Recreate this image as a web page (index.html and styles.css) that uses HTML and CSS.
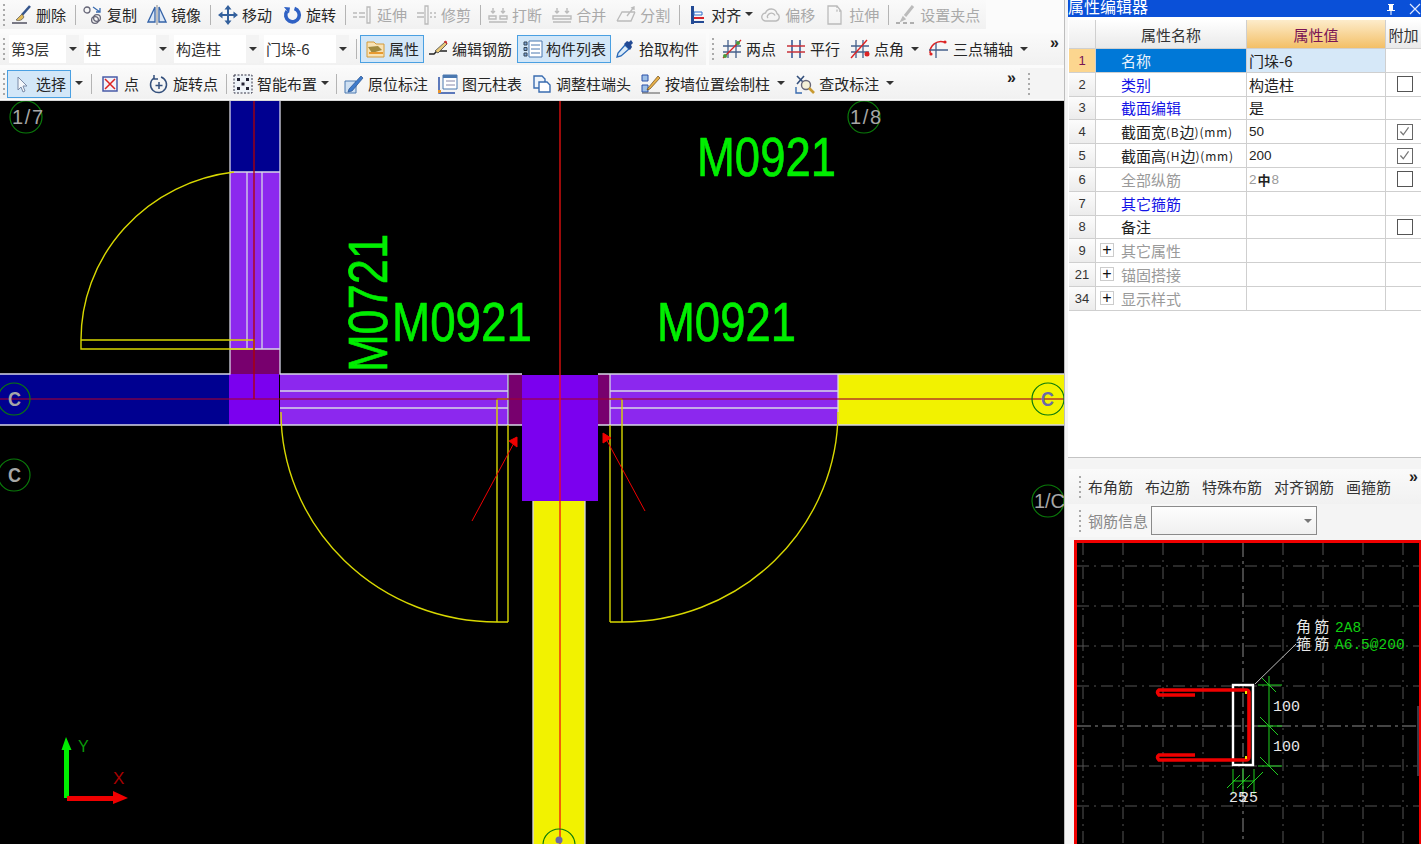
FILE: index.html
```html
<!DOCTYPE html>
<html lang="zh-CN">
<head>
<meta charset="utf-8">
<title>属性编辑器</title>
<link rel="stylesheet" href="styles.css">
</head>
<body>
<div class="app">
  <div class="left">
    <div class="toolbars">
      <div class="row r1">
        <div class="group g1">
          <i class="grip"></i>
          <span class="tool"><span class="ic"><svg viewBox="0 0 20 20"><path d="M18 1L10 10" stroke="#35558c" stroke-width="2.6" fill="none"/><path d="M10 9l-6 6q5 2 8-3z" fill="#e2bb58" stroke="#555" stroke-width=".7"/><path d="M0 18h15" stroke="#445" stroke-width="1.4"/></svg></span>删除</span>
          <i class="sep"></i>
          <span class="tool"><span class="ic"><svg viewBox="0 0 20 20" fill="none"><circle cx="4" cy="5" r="3" stroke="#667" stroke-width="1.3"/><circle cx="14" cy="13" r="3.4" stroke="#667" stroke-width="1.3"/><circle cx="12" cy="15" r="3.4" stroke="#667" stroke-width="1.3"/><path d="M10 2l7 5m0-4v4h-4" stroke="#3a6cb0" stroke-width="1.3"/></svg></span>复制</span>
          <span class="tool"><span class="ic"><svg viewBox="0 0 20 20"><path d="M8 2v15H1z" fill="#dbe7f6" stroke="#3563a8" stroke-width="1.3"/><path d="M12 2v15h7z" fill="#dbe7f6" stroke="#3563a8" stroke-width="1.3"/><path d="M10 0v20" stroke="#888"/></svg></span>镜像</span>
          <i class="sep"></i>
          <span class="tool"><span class="ic"><svg viewBox="0 0 20 20" fill="#33609c"><path d="M9 4h2v12H9zM4 9h12v2H4z"/><path d="M10 0l3.500 4.500h-7zM10 20l-3.500-4.500h7zM0 10l4.500-3.500v7zM20 10l-4.500 3.500v-7z"/></svg></span>移动</span>
          <span class="tool"><span class="ic"><svg viewBox="0 0 20 20" fill="none"><path d="M12.500 3.500A6.800 6.800 0 1 1 5 6" stroke="#2f61c4" stroke-width="3.600"/><path d="M2 2l6 .5-1 6z" fill="#2f61c4"/></svg></span>旋转</span>
          <i class="sep"></i>
          <span class="tool off"><span class="ic"><svg viewBox="0 0 20 20" fill="none" stroke="#bbb" stroke-width="1.300"><path d="M0 8h4M0 12h4M6 8h6M6 12h6"/><path d="M14 2h3v16h-3z"/></svg></span>延伸</span>
          <span class="tool off"><span class="ic"><svg viewBox="0 0 20 20" fill="none" stroke="#bbb" stroke-width="1.300"><path d="M0 8h7M0 12h7M13 8h2M17 8h2M13 12h2M17 12h2"/><path d="M8 1h3v18H8z"/></svg></span>修剪</span>
          <i class="sep"></i>
          <span class="tool off"><span class="ic"><svg viewBox="0 0 20 20" fill="none" stroke="#bbb" stroke-width="1.400"><path d="M1 11h7v3H1zM12 11h7v3h-7zM1 17h18M5 3v5M3 6l2 2 2-2M15 3v5M13 6l2 2 2-2"/></svg></span>打断</span>
          <span class="tool off"><span class="ic"><svg viewBox="0 0 20 20" fill="none" stroke="#bbb" stroke-width="1.400"><path d="M1 11h18v3H1zM1 17h18M5 3v5M3 6l2 2 2-2M15 3v5M13 6l2 2 2-2"/></svg></span>合并</span>
          <span class="tool off"><span class="ic"><svg viewBox="0 0 20 20" fill="none" stroke="#bbb" stroke-width="1.300"><path d="M1 16l5-9h13M1 16h14l4-9M11 11l7-9M15 3l3-1v3"/></svg></span>分割</span>
          <i class="sep"></i>
          <span class="tool dd"><span class="ic"><svg viewBox="0 0 20 20"><path d="M4 1h3v18H4z" fill="#234a94"/><path d="M7 7h8v3H7z" fill="#fff" stroke="#2a6bc8"/><path d="M7 13h10" stroke="#d8232a" stroke-width="2"/><path d="M7 17h10" stroke="#234a94" stroke-width="2"/></svg></span>对齐</span><i class="caret c0"></i>
          <span class="tool off"><span class="ic"><svg viewBox="0 0 20 20" fill="none" stroke="#bbb" stroke-width="1.400"><path d="M5 16a4 4 0 0 1-.5-8 6 6 0 0 1 11.500.5 4 4 0 0 1-1 7.500z"/><path d="M7 13a2 2 0 0 1 0-3 4 4 0 0 1 7 .5"/></svg></span>偏移</span>
          <span class="tool off"><span class="ic"><svg viewBox="0 0 20 20" fill="none" stroke="#bbb" stroke-width="1.300"><path d="M3 1h9l4 5v13H3z"/><path d="M12 1v5h4" stroke-dasharray="2 1.500"/></svg></span>拉伸</span>
          <i class="sep"></i>
          <span class="tool off"><span class="ic"><svg viewBox="0 0 20 20" fill="none" stroke="#bbb" stroke-width="1.400"><path d="M17 1l-8 10" stroke-width="3"/><path d="M7 12l-2 4 4-2z" fill="#bbb"/><path d="M0 18h4M7 18h4M14 18h4" stroke="#999"/></svg></span>设置夹点</span>
        </div>
      </div>
      <div class="row r2">
        <div class="group g2">
          <i class="grip g9"></i>
          <span class="combo w70">第3层<b class="cb"></b></span>
          <span class="combo">柱<b class="cb"></b></span>
          <span class="combo">构造柱<b class="cb"></b></span>
          <span class="combo">门垛-6<b class="cb"></b></span>
          <i class="sep sl"></i>
          <span class="tool on"><span class="ic"><svg viewBox="0 0 20 20"><path d="M1 3h7l2 2h8v13H1z" fill="#f8e2b4" stroke="#d39a3a"/><path d="M2 8l4 6 10-3-4-4z" fill="#a08a40"/><path d="M3 14h14" stroke="#e89a30" stroke-width="2"/></svg></span>属性</span>
          <span class="tool t5"><span class="ic"><svg viewBox="0 0 20 20" fill="none"><path d="M1 15h5l3-3h10" stroke="#222" stroke-width="1.400"/><path d="M7 12L17 3l2 2-9 9z" fill="#e8c878" stroke="#444" stroke-width=".8"/><path d="M16 3l2-1 1 3" fill="#c33" stroke="#c33"/></svg></span>编辑钢筋</span>
          <span class="tool on"><span class="ic"><svg viewBox="0 0 20 20"><path d="M6 2h13v16H6z" fill="#fff" stroke="#4a78b0"/><path d="M8 6h9M8 10h9M8 14h9" stroke="#4a78b0"/><path d="M1 3h3v3H1zM1 8.500h3v3H1zM1 14h3v3H1z" fill="#7ea6d8" stroke="#345"/></svg></span>构件列表</span>
          <span class="tool"><span class="ic"><svg viewBox="0 0 20 20"><path d="M2 18l1-4 7-8 4 4-8 7z" fill="#dcebf8" stroke="#2a6ab8" stroke-width="1.300"/><path d="M9 5l6 6 2-3-1-2 2-2-2-3-2 2-2-1z" fill="#234a94"/></svg></span>拾取构件</span>
        </div>
        <div class="group g3">
          <i class="grip g9"></i>
          <span class="tool"><span class="ic"><svg viewBox="0 0 20 20" fill="none"><path d="M6 1v18M14 1v18M1 7h18M1 13h18" stroke="#45608c" stroke-width="1.300"/><path d="M1 19L19 1" stroke="#d22" stroke-width="1.200"/><circle cx="3" cy="17" r="2" fill="#4a9a3a"/><circle cx="16" cy="4" r="2" fill="#4a9a3a"/></svg></span>两点</span>
          <span class="tool"><span class="ic"><svg viewBox="0 0 20 20" fill="none" stroke-width="1.600"><path d="M6 1v18M14 1v18" stroke="#3a5c96"/><path d="M1 7h18M1 13h18" stroke="#c8323a"/></svg></span>平行</span>
          <span class="tool dd"><span class="ic"><svg viewBox="0 0 20 20" fill="none"><path d="M6 1v18M13 1v18M1 7h18M1 13h18" stroke="#45608c" stroke-width="1.300"/><path d="M1 19L17 1" stroke="#d22" stroke-width="1.400"/><circle cx="17" cy="15" r="2.500" fill="#d22"/></svg></span>点角</span><i class="caret"></i>
          <span class="tool dd"><span class="ic"><svg viewBox="0 0 20 20" fill="none"><path d="M1 14a11 11 0 0 1 14-11" stroke="#d22" stroke-width="1.500"/><path d="M0 11h19M7 4v15" stroke="#45608c" stroke-width="1.300"/><circle cx="2" cy="15" r="1.600" fill="#d22"/><circle cx="16" cy="3" r="1.600" fill="#d22"/></svg></span>三点辅轴</span><i class="caret"></i>
          <span class="more">»</span>
        </div>
      </div>
      <div class="row r3">
        <div class="group g4">
          <i class="grip"></i>
          <span class="tool on"><span class="ic"><svg viewBox="0 0 20 20"><path d="M5 3v13l3-3 2 5 2-1-2-5h4z" fill="#f4f7fb" stroke="#7a8ba8"/></svg></span>选择</span><i class="caret c0"></i>
          <i class="sep wide"></i>
          <span class="tool"><span class="ic"><svg viewBox="0 0 20 20" fill="none"><path d="M3 3h14v14H3z" fill="#f3f3fa" stroke="#4a5ca8" stroke-width="1.500"/><path d="M5 5l10 10M15 5L5 15" stroke="#d22" stroke-width="1.500"/></svg></span>点</span>
          <span class="tool"><span class="ic"><svg viewBox="0 0 20 20" fill="none" stroke="#34507c" stroke-width="1.500"><path d="M5 4a8 8 0 1 0 7-1"/><path d="M5 1v4h4M10 8v7M6.500 11.500h7"/></svg></span>旋转点</span>
          <i class="sep tight"></i>
          <span class="tool dd"><span class="ic"><svg viewBox="0 0 20 20"><path d="M1 1h18v18H1z" fill="#eef3f8" stroke="#334" stroke-dasharray="2 1.500"/><path d="M4 4h3v3H4zM13 4h3v3h-3zM4 13h3v3H4zM13 13h3v3h-3zM8.500 8.500h3v3h-3z" fill="#223"/></svg></span>智能布置</span><i class="caret c0"></i>
          <i class="sep"></i>
          <span class="tool"><span class="ic"><svg viewBox="0 0 20 20"><path d="M1 7h11v12H1z" fill="#cfe0f2" stroke="#4a78b0"/><path d="M5 15L17 2l2 2L8 17l-4 1z" fill="#3f7ccc" stroke="#27508c" stroke-width=".7"/></svg></span>原位标注</span>
          <span class="tool"><span class="ic"><svg viewBox="0 0 20 20"><path d="M5 1h14v14H5z" fill="#fff" stroke="#4a78b0"/><path d="M5 1h14v3H5z" fill="#4a78b0"/><path d="M8 7h9M8 11h9" stroke="#88a"/><path d="M1 3v16h16" fill="none" stroke="#2a50a8" stroke-width="1.500"/><path d="M0 16h3v3H0z" fill="#e8942a"/></svg></span>图元柱表</span>
          <span class="tool"><span class="ic"><svg viewBox="0 0 20 20" fill="none" stroke="#3a6cb0" stroke-width="1.400"><path d="M2 2h8l3 3v9H2z" fill="#eef4fb"/><path d="M7 8h8l3 3v7H7z" fill="#fff"/></svg></span>调整柱端头</span>
          <span class="tool dd"><span class="ic"><svg viewBox="0 0 20 20"><path d="M1 1h6v6H1zM1 11h6v7H1z" fill="#9dbfe6" stroke="#2a50a8"/><path d="M7 14L17 2l2 2L9 15l-3 1z" fill="#e8b048" stroke="#6a4a18" stroke-width=".7"/><path d="M1 19h18" stroke="#555"/></svg></span>按墙位置绘制柱</span><i class="caret"></i>
          <span class="tool dd"><span class="ic"><svg viewBox="0 0 20 20" fill="none"><path d="M2 2l8 8M9 2l-7 8" stroke="#34507c" stroke-width="1.600"/><circle cx="11" cy="11" r="4.500" fill="#f4f0d8" stroke="#667" stroke-width="1.400"/><path d="M14 14l5 5" stroke="#c89a30" stroke-width="2.600"/><path d="M1 13v6h6" stroke="#3a6cb0" stroke-width="1.400"/></svg></span>查改标注</span><i class="caret"></i>
          <span class="more">»</span>
        </div>
        <div class="group g5"><i class="grip"></i></div>
      </div>
    </div>
    <div class="canvas">
      <svg class="cad" viewBox="0 101 1064 743" width="1064" height="743">
        <g class="walls">
          <rect x="230" y="100" width="50" height="72" fill="#000090"/>
          <rect x="230" y="172" width="50" height="177" fill="#8c28ee"/>
          <rect x="230" y="349" width="50" height="25" fill="#78006e"/>
          <rect x="0" y="374" width="229" height="51" fill="#000090"/>
          <rect x="229" y="374" width="50" height="51" fill="#7b00ef"/>
          <rect x="280" y="374" width="228" height="51" fill="#8c28ee"/>
          <rect x="509" y="374" width="13" height="51" fill="#78006e"/>
          <rect x="598" y="374" width="12" height="51" fill="#78006e"/>
          <rect x="610" y="374" width="228" height="51" fill="#8c28ee"/>
          <rect x="838" y="374" width="226" height="51" fill="#f2f200"/>
          <rect x="533" y="501" width="52" height="343" fill="#f2f200"/>
          <rect x="522" y="375" width="76" height="126" fill="#7b00ef"/>
        </g>
        <g class="edges">
          <path d="M230 100V374H0M280 100V374H522M230 172H280M230 349H280M247 172V349M262 172V349M0 425H522M598 374H1064M598 425H1064M280 391H508M280 408H508M610 391H838M610 408H838M508 374V425M610 374V425M838 374V425M533 501V844M585 501V844"/>
        </g>
        <g class="doors">
          <path d="M81 341A174 169 0 0 1 234 172M81 340H254V349H81V340M254 340V349"/>
          <path d="M281 412A216 210 0 0 0 497 622M497 399H508M497 399V622H508M508 425V622"/>
          <path d="M838 412A216 210 0 0 1 622 622M610 399H622M622 399V622H610M610 425V622"/>
        </g>
        <g class="axis">
          <path class="ax-h" d="M0 399H1064"/>
          <path class="ax-v1" d="M254 100V399"/>
          <path class="ax-v2" d="M560 100V844"/>
        </g>
        <g class="arrows">
          <path d="M472 521L515 441M645 511L605 437"/>
          <path class="head" d="M517 437V447L509 441ZM603 433V443L611 438Z"/>
        </g>
        <g class="labels">
          <text x="697" y="176" textLength="139" lengthAdjust="spacingAndGlyphs">M0921</text>
          <text x="392" y="341" textLength="140" lengthAdjust="spacingAndGlyphs">M0921</text>
          <text x="657" y="341" textLength="139" lengthAdjust="spacingAndGlyphs">M0921</text>
          <text transform="translate(387 372) rotate(-90)" textLength="138" lengthAdjust="spacingAndGlyphs">M0721</text>
        </g>
        <g class="bubbles">
          <circle cx="26" cy="117" r="16"/>
          <circle cx="864" cy="117" r="16"/>
          <circle cx="14" cy="399" r="16"/>
          <circle cx="14" cy="475" r="16"/>
          <circle cx="1048" cy="399" r="16"/>
          <circle cx="1048" cy="501" r="16"/>
          <circle cx="559" cy="845" r="16"/>
          <text class="num" x="12" y="124" textLength="31" lengthAdjust="spacing">1/7</text>
          <text class="num" x="850" y="124" textLength="31" lengthAdjust="spacing">1/8</text>
          <text x="8" y="406" textLength="13" lengthAdjust="spacingAndGlyphs">C</text>
          <text x="8" y="482" textLength="13" lengthAdjust="spacingAndGlyphs">C</text>
          <text class="on-y" x="1041" y="406" textLength="13" lengthAdjust="spacingAndGlyphs">C</text>
          <text class="num" x="1034" y="508" textLength="31" lengthAdjust="spacing">1/C</text>
          <circle class="dot" cx="559" cy="840" r="3.500"/>
        </g>
        <g class="ucs">
          <path class="gy" d="M64 798V750H61.500L66 737L71.500 750H69V798Z"/>
          <path class="rx" d="M67 796H113V791L128 798L113 804V801H67Z"/>
          <text class="ty" x="78" y="752">Y</text>
          <text class="tx" x="113" y="784">X</text>
        </g>
      </svg>
    </div>
  </div>
  <div class="right">
    <div class="titlebar">
      <span class="title">属性编辑器</span>
      <svg class="pin" viewBox="0 0 12 12"><path d="M3 1h6v1H8v5h2v1H6.500v4h-1V8H2V7h2V2H3z" fill="#fff"/></svg>
      <svg class="close" viewBox="0 0 12 12"><path d="M1 1l10 10M11 1L1 11" stroke="#dfe8ff" stroke-width="1.200"/></svg>
    </div>
    <div class="props">
      <div class="grid">
        <div class="c h idx"></div><div class="c h">属性名称</div><div class="c h hv">属性值</div><div class="c h ext">附加</div>

        <div class="c idx sel">1</div><div class="c nm act">名称</div><div class="c val cur">门垛-6</div><div class="c ck"></div>
        <div class="c idx">2</div><div class="c nm blue">类别</div><div class="c val">构造柱</div><div class="c ck"><i class="box"></i></div>
        <div class="c idx">3</div><div class="c nm blue">截面编辑</div><div class="c val">是</div><div class="c ck"></div>
        <div class="c idx">4</div><div class="c nm">截面宽<small>(B</small>边<small>)(mm)</small></div><div class="c val num">50</div><div class="c ck"><i class="box yes"><svg viewBox="0 0 16 16"><path d="M3 8l3.500 4L13 3" fill="none" stroke="#777" stroke-width="1.500"/></svg></i></div>
        <div class="c idx">5</div><div class="c nm">截面高<small>(H</small>边<small>)(mm)</small></div><div class="c val num">200</div><div class="c ck"><i class="box yes"><svg viewBox="0 0 16 16"><path d="M3 8l3.500 4L13 3" fill="none" stroke="#777" stroke-width="1.500"/></svg></i></div>
        <div class="c idx">6</div><div class="c nm gray">全部纵筋</div><div class="c val num gray">2 <b class="phi">中</b>8</div><div class="c ck"><i class="box"></i></div>
        <div class="c idx">7</div><div class="c nm blue">其它箍筋</div><div class="c val"></div><div class="c ck"></div>
        <div class="c idx">8</div><div class="c nm">备注</div><div class="c val"></div><div class="c ck"><i class="box"></i></div>
        <div class="c idx">9</div><div class="c nm gray"><i class="plus">+</i>其它属性</div><div class="c val"></div><div class="c ck"></div>
        <div class="c idx">21</div><div class="c nm gray"><i class="plus">+</i>锚固搭接</div><div class="c val"></div><div class="c ck"></div>
        <div class="c idx">34</div><div class="c nm gray"><i class="plus">+</i>显示样式</div><div class="c val"></div><div class="c ck"></div>
      </div>
    </div>
    <div class="rebar">
      <div class="rtool">
        <i class="grip"></i>
        <span class="rt">布角筋</span><span class="rt">布边筋</span><span class="rt">特殊布筋</span><span class="rt">对齐钢筋</span><span class="rt">画箍筋</span>
        <span class="more">»</span>
      </div>
      <div class="rinfo">
        <i class="grip"></i>
        <span class="rlabel">钢筋信息</span>
        <span class="select"><b></b></span>
      </div>
      <div class="section">
        <svg viewBox="1077 544 342 300" width="342" height="300">
          <path class="g" d="M1083 544V844M1123 544V844M1163 544V844M1203 544V844M1283 544V844M1323 544V844M1363 544V844M1403 544V844M1077 567H1419M1077 607H1419M1077 647H1419M1077 687H1419M1077 767H1419M1077 807H1419"/>
          <path class="gc" d="M1243 544V844M1077 727H1419"/>
          <path class="leader" d="M1255 685L1296 645"/>
          <rect class="conc" x="1233" y="686" width="20" height="80"/>
          <path class="bar" d="M1195 696H1159Q1156 693 1159 691H1246Q1249 691 1249 694V758Q1249 761 1246 761H1159Q1156 758 1159 756H1195"/>
          <path class="dim" d="M1269 677V767M1258 686H1282M1258 727H1282M1258 767H1282M1262 679L1276 693M1260 718L1278 736M1260 758L1278 776M1233 770V795M1243 770V795M1254 770V795M1233 782H1254M1227 789L1240 776M1237 789L1250 776M1247 789L1263 773"/>
          <rect class="pt" x="1245" y="692" width="2" height="3"/>
          <rect class="pt" x="1245" y="757" width="2" height="3"/>
          <text class="dt" x="1273" y="712">100</text>
          <text class="dt" x="1273" y="752">100</text>
          <text class="dt" x="1229" y="803">25</text>
          <text class="dt" x="1240" y="803">25</text>
          <text class="cn" x="1296" y="633">角 筋</text>
          <text class="cn" x="1296" y="650">箍 筋</text>
          <text class="gn" x="1335" y="633">2A8</text>
          <text class="gn" x="1335" y="650">A6.5@200</text>
        </svg>
        <i class="thumb"></i>
      </div>
    </div>
  </div>
</div>
</body>
</html>
```
FILE: styles.css
```css
* { box-sizing: border-box; }
html, body { margin: 0; height: 100%; }
body {
  background: #f0f0f0;
  font-family: "Noto Sans CJK SC", "Liberation Sans", sans-serif;
  font-size: 15px;
  color: #262626;
  overflow: hidden;
}
i { font-style: normal; display: block; }
.app { display: flex; width: 1421px; height: 844px; overflow: hidden; }
.left { width: 1064px; display: flex; flex-direction: column; flex: none; }
.toolbars { height: 101px; background: #fbfbfb; flex: none; border-bottom: 1px solid #d8d8d8; }
.row { display: flex; white-space: nowrap; }
.r1 { height: 29px; margin-bottom: 4px; }
.r2 { height: 32px; margin-bottom: 3px; }
.r3 { height: 31px; }
.group { display: flex; align-items: center; background: linear-gradient(#fafafa, #f1f1f1); }
.g1 { width: 986px; }
.g2 { width: 706px; margin-right: 3px; }
.g3 { flex: 1; padding-right: 5px; }
.g4 { width: 1020px; padding-right: 4px; }
.g5 { width: 44px; padding-left: 5px; background: #f4f4f4; }
.grip {
  width: 8px; height: 22px; flex: none;
  background: repeating-linear-gradient(#aaa 0 2px, transparent 2px 5px) 3px 0 / 2px 100% no-repeat;
}
.g9 { width: 9px; }
.g4 > .grip { width: 7px; }
.tool { display: flex; align-items: center; flex: none; padding-right: 6px; height: 28px; line-height: 28px; }
.ic { width: 28px; height: 28px; flex: none; display: flex; align-items: center; justify-content: center; }
.ic svg { width: 20px; height: 20px; display: block; }
.off { color: #a9a9a9; }
.dd { padding-right: 0; }
.t5 { padding-right: 5px; }
.on { background: #d3e7f8; border: 1px solid #4aa0e2; padding: 0 4px 0 1px; }
.on .ic { width: 27px; }
.sep { width: 1px; height: 20px; background: #b4b4b4; margin: 0 3px; flex: none; }
.sep.sl { margin-left: 2px; }
.sep.wide { margin: 0 4px; }
.sep.tight { margin: 0 2px; }
.caret { width: 14px; height: 5px; flex: none; margin: 0 3px 0 4px; position: relative; }
.caret::before {
  content: ""; position: absolute; left: 3px; top: 0;
  border: 4px solid transparent; border-top-color: #333; border-bottom: 0;
}
.caret.c0 { margin: 0 1px; }
.more { margin-left: auto; font: bold 16px/16px "Liberation Sans", sans-serif; align-self: flex-start; padding-top: 2px; color: #222; }
.combo {
  width: 85px; height: 28px; margin-right: 5px; padding-left: 2px; background: #fff;
  flex: none; position: relative; line-height: 27px; color: #333;
}
.w70 { width: 70px; }
.cb { position: absolute; right: 0; top: 0; width: 13px; height: 28px; background: #f3f3f3; }
.cb::after {
  content: ""; position: absolute; left: 3px; top: 12px;
  border: 4px solid transparent; border-top-color: #333; border-bottom: 0;
}

.canvas { height: 743px; background: #000; overflow: hidden; flex: none; }
.cad { display: block; }
.edges path { fill: none; stroke: #d6d6e6; stroke-width: 1.300; }
.doors path { fill: none; stroke: #d8d800; stroke-width: 1.400; }
.ax-h { stroke: #a00030; stroke-opacity: .75; stroke-width: 1.500; fill: none; }
.ax-v1 { stroke: #b00000; stroke-width: 1.300; fill: none; }
.ax-v2 { stroke: #f01010; stroke-width: 1.300; fill: none; }
.arrows path { stroke: #f00000; stroke-width: 1; fill: none; }
.arrows .head { fill: #f00000; }
.labels text { font: 56px "Liberation Sans", sans-serif; fill: #00ee00; stroke: #00ee00; stroke-width: .7; }
.bubbles circle { fill: none; stroke: #0a7a0a; stroke-width: 1.200; }
.bubbles text { font: bold 20px "Liberation Sans", sans-serif; fill: #a6a6a6; }
.bubbles text.num { font: 20px "Liberation Sans", sans-serif; }
.bubbles .on-y { fill: #6a6aa8; }
.bubbles .dot { fill: #6a6aa8; stroke: none; }
.gy { fill: #00ee00; }
.rx { fill: #f00000; }
.ty { font: 16px "Liberation Sans", sans-serif; fill: #0a9a0a; }
.tx { font: 17px "Liberation Sans", sans-serif; fill: #a80000; }

.right { flex: 1; display: flex; flex-direction: column; min-width: 0; background: #f4f4f4; border-left: 1px solid #bdbdbd; }
.titlebar {
  height: 17px; margin-left: 3px; background: #0a50d8; color: #fff; display: flex; align-items: center;
  overflow: hidden; flex: none;
}
.title { font-size: 16px; line-height: 17px; margin-top: -5px; flex: 1; }
.pin { width: 12px; height: 12px; margin-right: 12px; }
.close { width: 12px; height: 12px; }
.props { height: 441px; margin-left: 3px; background: #fff; border-bottom: 1px solid #c4c4c4; padding: 3px 0 0 1px; flex: none; }
.grid {
  display: grid; grid-template-columns: 27px 151px 139px 35px;
  grid-template-rows: 29px repeat(11, 23.800px);
  font-size: 15px;
}
.c { border-right: 1px solid #cfcfcf; border-bottom: 1px solid #cfcfcf; display: flex; align-items: center; line-height: 1; overflow: hidden; white-space: nowrap; color: #222; }
.h { background: linear-gradient(#fff, #e9e9e9); justify-content: center; color: #333; font-size: 15px; }
.hv { background: linear-gradient(#fdeccb, #f3bf66); color: #7a1454; }
.ext { border-right: 0; }
.idx { background: linear-gradient(#fcfcfc, #ececec); justify-content: center; font: 13px "Liberation Sans", sans-serif; color: #333; }
.sel { background: #fcd68f; color: #7a1454; }
.nm { padding-left: 25px; position: relative; }
.nm small { font-size: 12px; letter-spacing: .8px; }
.act { background: #0078d7; color: #e8f2fc; }
.blue { color: #1414e6; }
.gray { color: #9a9a9a; }
.val { padding-left: 2px; }
.num { font: 13.500px "Liberation Sans", sans-serif; }
.cur { background: #d6e8f8; }
.phi { font: bold 13px "Noto Sans CJK SC", sans-serif; color: #222; margin: 0 1px; }
.ck { border-right: 0; justify-content: center; padding-left: 3px; }
.box { width: 16px; height: 16px; border: 1.500px solid #555; background: #fff; }
.box.yes { border-color: #666; }
.box svg { display: block; width: 13px; height: 13px; }
.plus {
  position: absolute; left: 4px; top: 4px; width: 14px; height: 14px; border: 1px solid #ccc;
  font: 16px/12px "Liberation Sans", sans-serif; color: #111; text-align: center;
}
.rebar { flex: 1; margin-top: 8px; min-height: 0; background: #f4f4f4; margin-left: 3px; display: flex; flex-direction: column; }
.rtool { height: 35px; margin-top: 3px; padding: 0 3px 0 8px; display: flex; align-items: center; background: linear-gradient(#fafafa, #f1f1f1); flex: none; color: #333; }
.rt { margin-right: 12px; flex: none; }
.grip + .rt { margin-left: 4px; }
.rtool .more { padding-top: 0; }
.rinfo { height: 33px; width: 249px; margin-bottom: 3px; padding-left: 8px; display: flex; align-items: center; background: #f7f7f7; flex: none; }
.rlabel { color: #8a8a8a; width: 60px; margin-left: 4px; flex: none; }
.select { width: 166px; height: 29px; border: 1px solid #8a8a8a; background: linear-gradient(#fdfdfd, #f0f0f0); position: relative; flex: none; margin-left: 3px; }
.select b { position: absolute; right: 4px; top: 12px; border: 4px solid transparent; border-top-color: #777; border-bottom: 0; }
.section {
  flex: 1; min-height: 0; margin-left: 6px; background: #000; overflow: hidden; position: relative;
  border: 3px solid #f00000; border-width: 3px 2px 0 3px;
}
.section svg { display: block; }
.g { stroke: #555; stroke-width: 1; stroke-dasharray: 12 5 2 5; fill: none; }
.gc { stroke: #8a8a8a; stroke-width: 1; stroke-dasharray: 14 4 3 4; fill: none; }
.leader { stroke: #bbb; stroke-width: 1; fill: none; }
.conc { fill: none; stroke: #fff; stroke-width: 2.400; }
.bar { fill: none; stroke: #f00000; stroke-width: 3.600; }
.dim { stroke: #1fd01f; stroke-width: 1; fill: none; }
.pt { fill: #e8e800; }
.dt { font: 15px "Liberation Mono", monospace; fill: #e8e8e8; }
.cn { font: 15px "Noto Sans CJK SC", sans-serif; fill: #e8e8e8; }
.gn { font: 14.500px "Liberation Mono", monospace; fill: #10d010; }
.thumb { position: absolute; right: -2px; top: 163px; width: 4px; height: 70px; background: #3a3a46; }
```
